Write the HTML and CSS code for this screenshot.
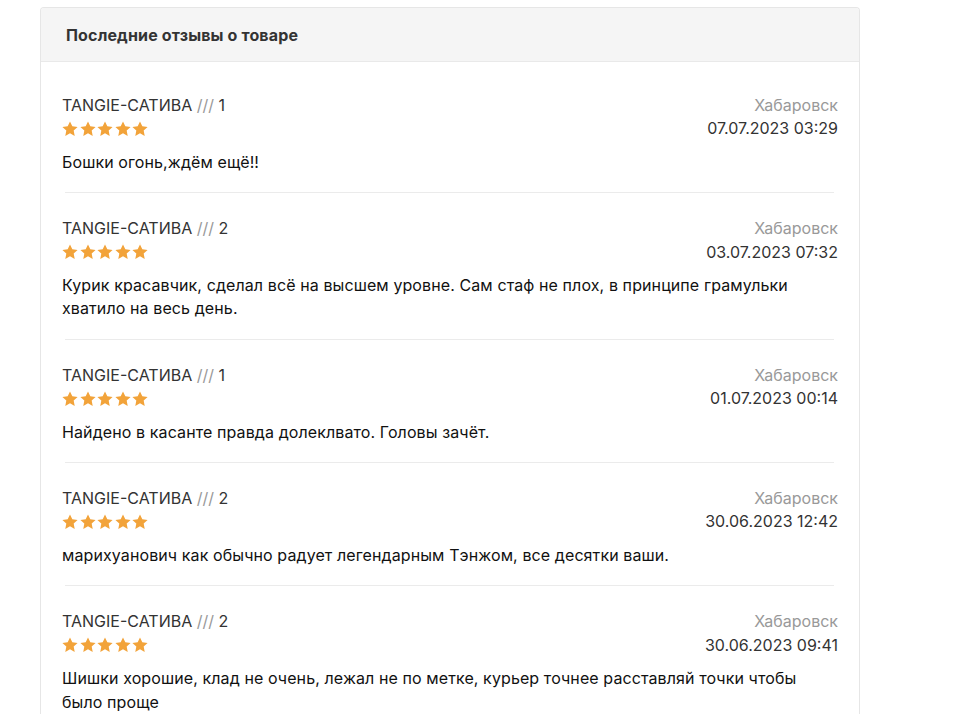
FILE: index.html
```html
<!DOCTYPE html>
<html lang="ru">
<head>
<meta charset="utf-8">
<link rel="stylesheet" href="styles.css">
</head>
<body>
<div class="card">
  <div class="card-head">Последние отзывы о товаре</div>
  <div class="card-body">
    <div class="review">
      <div class="review-top">
        <div class="who">
          <div class="name">TANGIE-САТИВА <span class="slash">///</span> 1</div>
          <div class="stars"><svg viewBox="0 0 20 20"><path d="M10 .6l2.9 6 6.6.8-4.9 4.6 1.3 6.6L10 15.3l-5.9 3.3 1.3-6.6L.5 7.4l6.6-.8z"/></svg><svg viewBox="0 0 20 20"><path d="M10 .6l2.9 6 6.6.8-4.9 4.6 1.3 6.6L10 15.3l-5.9 3.3 1.3-6.6L.5 7.4l6.6-.8z"/></svg><svg viewBox="0 0 20 20"><path d="M10 .6l2.9 6 6.6.8-4.9 4.6 1.3 6.6L10 15.3l-5.9 3.3 1.3-6.6L.5 7.4l6.6-.8z"/></svg><svg viewBox="0 0 20 20"><path d="M10 .6l2.9 6 6.6.8-4.9 4.6 1.3 6.6L10 15.3l-5.9 3.3 1.3-6.6L.5 7.4l6.6-.8z"/></svg><svg viewBox="0 0 20 20"><path d="M10 .6l2.9 6 6.6.8-4.9 4.6 1.3 6.6L10 15.3l-5.9 3.3 1.3-6.6L.5 7.4l6.6-.8z"/></svg></div>
        </div>
        <div class="meta">
          <div class="city">Хабаровск</div>
          <div class="date">07.07.2023 03:29</div>
        </div>
      </div>
      <div class="text">Бошки огонь,ждём ещё!!</div>
    </div>
    <div class="sep"></div>
    <div class="review">
      <div class="review-top">
        <div class="who">
          <div class="name">TANGIE-САТИВА <span class="slash">///</span> 2</div>
          <div class="stars"><svg viewBox="0 0 20 20"><path d="M10 .6l2.9 6 6.6.8-4.9 4.6 1.3 6.6L10 15.3l-5.9 3.3 1.3-6.6L.5 7.4l6.6-.8z"/></svg><svg viewBox="0 0 20 20"><path d="M10 .6l2.9 6 6.6.8-4.9 4.6 1.3 6.6L10 15.3l-5.9 3.3 1.3-6.6L.5 7.4l6.6-.8z"/></svg><svg viewBox="0 0 20 20"><path d="M10 .6l2.9 6 6.6.8-4.9 4.6 1.3 6.6L10 15.3l-5.9 3.3 1.3-6.6L.5 7.4l6.6-.8z"/></svg><svg viewBox="0 0 20 20"><path d="M10 .6l2.9 6 6.6.8-4.9 4.6 1.3 6.6L10 15.3l-5.9 3.3 1.3-6.6L.5 7.4l6.6-.8z"/></svg><svg viewBox="0 0 20 20"><path d="M10 .6l2.9 6 6.6.8-4.9 4.6 1.3 6.6L10 15.3l-5.9 3.3 1.3-6.6L.5 7.4l6.6-.8z"/></svg></div>
        </div>
        <div class="meta">
          <div class="city">Хабаровск</div>
          <div class="date">03.07.2023 07:32</div>
        </div>
      </div>
      <div class="text">Курик красавчик, сделал всё на высшем уровне. Сам стаф не плох, в принципе грамульки хватило на весь день.</div>
    </div>
    <div class="sep"></div>
    <div class="review">
      <div class="review-top">
        <div class="who">
          <div class="name">TANGIE-САТИВА <span class="slash">///</span> 1</div>
          <div class="stars"><svg viewBox="0 0 20 20"><path d="M10 .6l2.9 6 6.6.8-4.9 4.6 1.3 6.6L10 15.3l-5.9 3.3 1.3-6.6L.5 7.4l6.6-.8z"/></svg><svg viewBox="0 0 20 20"><path d="M10 .6l2.9 6 6.6.8-4.9 4.6 1.3 6.6L10 15.3l-5.9 3.3 1.3-6.6L.5 7.4l6.6-.8z"/></svg><svg viewBox="0 0 20 20"><path d="M10 .6l2.9 6 6.6.8-4.9 4.6 1.3 6.6L10 15.3l-5.9 3.3 1.3-6.6L.5 7.4l6.6-.8z"/></svg><svg viewBox="0 0 20 20"><path d="M10 .6l2.9 6 6.6.8-4.9 4.6 1.3 6.6L10 15.3l-5.9 3.3 1.3-6.6L.5 7.4l6.6-.8z"/></svg><svg viewBox="0 0 20 20"><path d="M10 .6l2.9 6 6.6.8-4.9 4.6 1.3 6.6L10 15.3l-5.9 3.3 1.3-6.6L.5 7.4l6.6-.8z"/></svg></div>
        </div>
        <div class="meta">
          <div class="city">Хабаровск</div>
          <div class="date">01.07.2023 00:14</div>
        </div>
      </div>
      <div class="text">Найдено в касанте правда долеклвато. Головы зачёт.</div>
    </div>
    <div class="sep"></div>
    <div class="review">
      <div class="review-top">
        <div class="who">
          <div class="name">TANGIE-САТИВА <span class="slash">///</span> 2</div>
          <div class="stars"><svg viewBox="0 0 20 20"><path d="M10 .6l2.9 6 6.6.8-4.9 4.6 1.3 6.6L10 15.3l-5.9 3.3 1.3-6.6L.5 7.4l6.6-.8z"/></svg><svg viewBox="0 0 20 20"><path d="M10 .6l2.9 6 6.6.8-4.9 4.6 1.3 6.6L10 15.3l-5.9 3.3 1.3-6.6L.5 7.4l6.6-.8z"/></svg><svg viewBox="0 0 20 20"><path d="M10 .6l2.9 6 6.6.8-4.9 4.6 1.3 6.6L10 15.3l-5.9 3.3 1.3-6.6L.5 7.4l6.6-.8z"/></svg><svg viewBox="0 0 20 20"><path d="M10 .6l2.9 6 6.6.8-4.9 4.6 1.3 6.6L10 15.3l-5.9 3.3 1.3-6.6L.5 7.4l6.6-.8z"/></svg><svg viewBox="0 0 20 20"><path d="M10 .6l2.9 6 6.6.8-4.9 4.6 1.3 6.6L10 15.3l-5.9 3.3 1.3-6.6L.5 7.4l6.6-.8z"/></svg></div>
        </div>
        <div class="meta">
          <div class="city">Хабаровск</div>
          <div class="date">30.06.2023 12:42</div>
        </div>
      </div>
      <div class="text">марихуанович как обычно радует легендарным Тэнжом, все десятки ваши.</div>
    </div>
    <div class="sep"></div>
    <div class="review">
      <div class="review-top">
        <div class="who">
          <div class="name">TANGIE-САТИВА <span class="slash">///</span> 2</div>
          <div class="stars"><svg viewBox="0 0 20 20"><path d="M10 .6l2.9 6 6.6.8-4.9 4.6 1.3 6.6L10 15.3l-5.9 3.3 1.3-6.6L.5 7.4l6.6-.8z"/></svg><svg viewBox="0 0 20 20"><path d="M10 .6l2.9 6 6.6.8-4.9 4.6 1.3 6.6L10 15.3l-5.9 3.3 1.3-6.6L.5 7.4l6.6-.8z"/></svg><svg viewBox="0 0 20 20"><path d="M10 .6l2.9 6 6.6.8-4.9 4.6 1.3 6.6L10 15.3l-5.9 3.3 1.3-6.6L.5 7.4l6.6-.8z"/></svg><svg viewBox="0 0 20 20"><path d="M10 .6l2.9 6 6.6.8-4.9 4.6 1.3 6.6L10 15.3l-5.9 3.3 1.3-6.6L.5 7.4l6.6-.8z"/></svg><svg viewBox="0 0 20 20"><path d="M10 .6l2.9 6 6.6.8-4.9 4.6 1.3 6.6L10 15.3l-5.9 3.3 1.3-6.6L.5 7.4l6.6-.8z"/></svg></div>
        </div>
        <div class="meta">
          <div class="city">Хабаровск</div>
          <div class="date">30.06.2023 09:41</div>
        </div>
      </div>
      <div class="text">Шишки хорошие, клад не очень, лежал не по метке, курьер точнее расставляй точки чтобы было проще</div>
    </div>
  </div>
</div>
</body>
</html>
```

FILE: styles.css
```css
html, body {
  margin: 0;
  padding: 0;
  background: #fff;
}
body {
  font-family: Inter, "Noto Sans", sans-serif;
  color: #222;
  padding: 7px 0 0 40px;
}
.card {
  width: 820px;
  border: 1px solid #e6e6e6;
  border-bottom: none;
  border-radius: 4px 4px 0 0;
  height: 720px;
  overflow: hidden;
  box-sizing: border-box;
}
.card-head {
  background: #f5f5f5;
  border-bottom: 1px solid #e9e9e9;
  height: 54px;
  box-sizing: border-box;
  display: flex;
  align-items: center;
  padding-left: 25px;
  font-size: 16px;
  letter-spacing: 0.15px;
  font-weight: 700;
  color: #333;
}
.card-body {
  padding: 32px 21px 0 21px;
}
.review-top {
  display: flex;
  justify-content: space-between;
}
.name, .city, .date {
  font-size: 16px;
  line-height: 23.4px;
}
.name {
  color: #333;
}
.slash {
  color: #999;
}
.stars {
  display: flex;
  gap: 1.5px;
  height: 23.4px;
  align-items: center;
}
.stars svg {
  width: 16px;
  height: 16px;
  fill: #f2a33a;
}
.meta {
  text-align: right;
}
.city {
  color: #999;
}
.date {
  color: #333;
}
.text {
  margin-top: 10px;
  font-size: 16px;
  letter-spacing: 0.1px;
  line-height: 23.4px;
  color: #111;
}
.sep {
  height: 1px;
  background: #ebebeb;
  margin: 18px 4px 24px 3px;
}
```
